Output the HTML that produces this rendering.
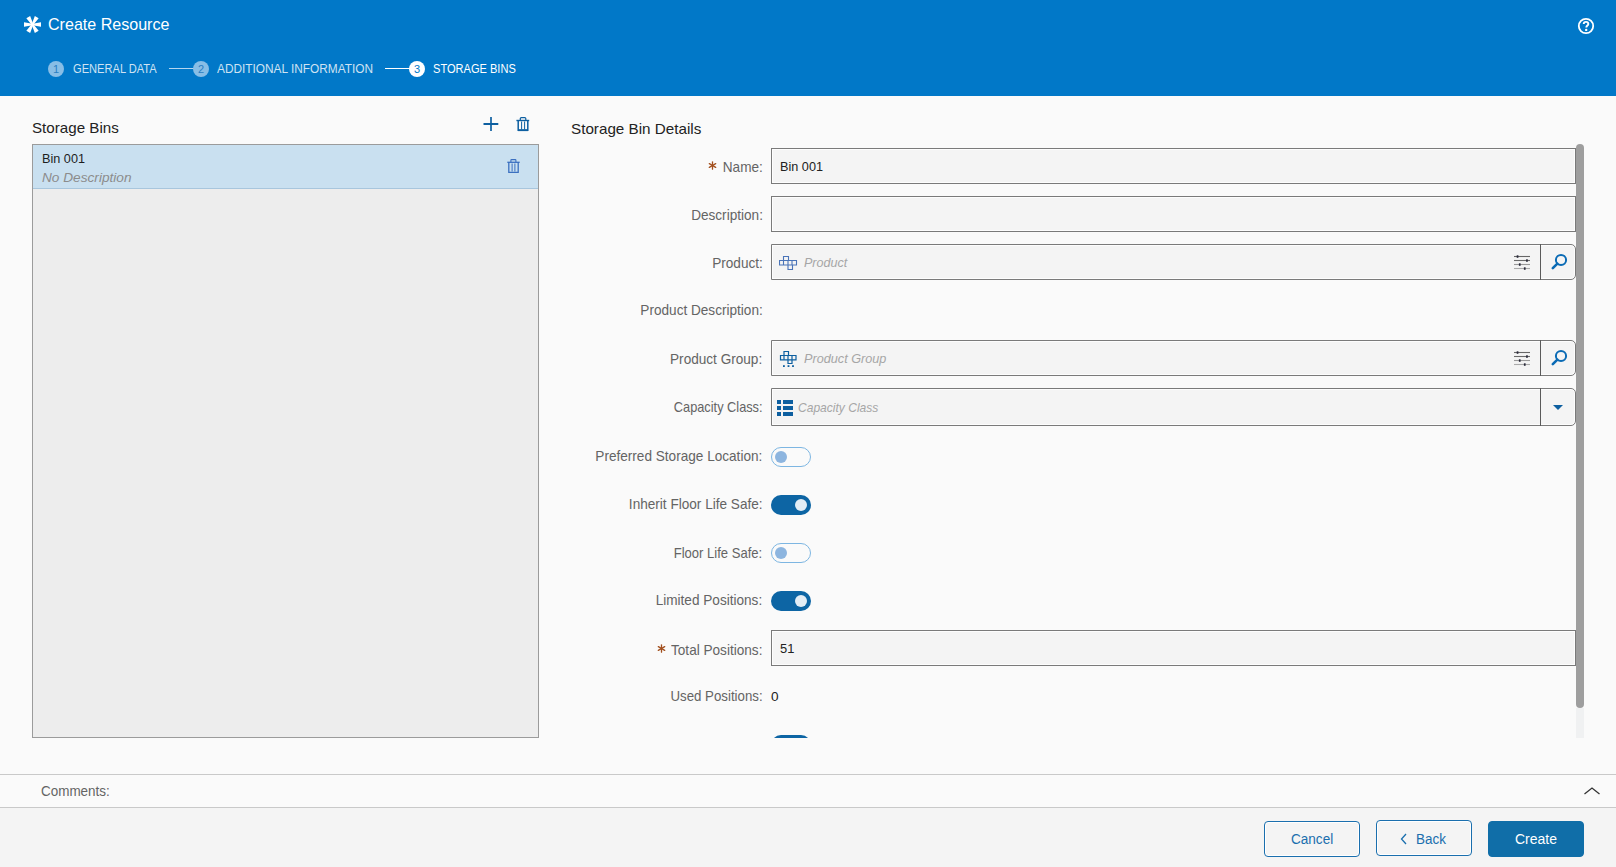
<!DOCTYPE html>
<html><head><meta charset="utf-8">
<style>
*{box-sizing:border-box;margin:0;padding:0}
html,body{width:1616px;height:867px;overflow:hidden;background:#fafafa;font-family:"Liberation Sans",sans-serif;color:#333}
.abs{position:absolute}
.t{position:absolute;white-space:nowrap;line-height:1}
#hdr{position:absolute;left:0;top:0;width:1616px;height:96px;background:#0178c8}
.step{position:absolute;top:61px;width:16px;height:16px;border-radius:50%;background:#88bee6;color:#2b7fc2;font-size:11px;line-height:16px;text-align:center}
.step.cur{background:#fff;color:#0178c8}
.stxt{position:absolute;top:63.4px;font-size:12.5px;line-height:1;color:#cfe3f3;white-space:nowrap;transform-origin:0 0}
.stxt.cur{color:#fff}
.sline{position:absolute;top:68px;height:1px;background:#b5d6ef}
.lbl{position:absolute;right:853.5px;font-size:14.2px;color:#646464;white-space:nowrap;line-height:1;text-align:right;transform-origin:100% 0}
.inp{position:absolute;left:771px;width:805px;background:#f4f4f4;border:1px solid #7a7a7a;box-shadow:inset 0 0 0 1px #fdfdfd}
.val{position:absolute;font-size:13px;color:#222;line-height:1;white-space:nowrap}
.ph{position:absolute;font-size:13px;color:#a6a6a6;font-style:italic;line-height:1;white-space:nowrap;transform-origin:0 0}
.tog{position:absolute;left:771px;width:40px;height:20px;border-radius:10px}
.tog.off{border:1px solid #7db6e2;background:#fafafa}
.tog.on{background:#0d65a4}
.knob{position:absolute;width:12px;height:12px;border-radius:50%}
.off .knob{left:3px;top:3px;background:#8db5df}
.on .knob{left:24px;top:4px;background:#e3edf5}
.btn{position:absolute;top:821px;width:96px;height:36px;border:1px solid #1a6fae;border-radius:4px;box-shadow:inset 0 0 0 1px #fff;background:#f4f4f4}
.btxt{position:absolute;top:832.1px;font-size:14px;line-height:1;color:#1a6fae;white-space:nowrap}
.sep{position:absolute;width:1px;background:#5a5a5a}
.ast{position:absolute;width:9px;height:9px}
</style></head><body>
<div id="hdr">
  <svg class="abs" style="left:22.7px;top:14.5px" width="19" height="19" viewBox="-9.5 -9.5 19 19">
    <g fill="#fff">
      <path d="M-8.5 -2.2 L0 -0.8 L8.5 -2.2 L8.5 2.2 L0 0.8 L-8.5 2.2 Z"/>
      <path d="M-8.5 -2.2 L0 -0.8 L8.5 -2.2 L8.5 2.2 L0 0.8 L-8.5 2.2 Z" transform="rotate(60)"/>
      <path d="M-8.5 -2.2 L0 -0.8 L8.5 -2.2 L8.5 2.2 L0 0.8 L-8.5 2.2 Z" transform="rotate(120)"/>
      <circle r="1.8"/>
    </g>
  </svg>
  <div class="t" style="left:48px;top:15.6px;font-size:17px;color:#fff;transform:scaleX(0.945);transform-origin:0 0">Create Resource</div>
  <div class="step" style="left:48px">1</div>
  <div class="stxt" style="left:72.5px;transform:scaleX(0.888)">GENERAL DATA</div>
  <div class="sline" style="left:169px;width:25px"></div>
  <div class="step" style="left:193px">2</div>
  <div class="stxt" style="left:217px;transform:scaleX(0.948)">ADDITIONAL INFORMATION</div>
  <div class="sline" style="left:385px;width:25px;background:#fff"></div>
  <div class="step cur" style="left:409px">3</div>
  <div class="stxt cur" style="left:433.3px;transform:scaleX(0.885)">STORAGE BINS</div>
  <svg class="abs" style="left:1577px;top:17px" width="18" height="18" viewBox="0 0 18 18">
    <circle cx="9" cy="9" r="7.2" fill="none" stroke="#fff" stroke-width="1.8"/>
    <path d="M6.7 7.1 C6.7 5.6 7.7 4.9 9 4.9 C10.4 4.9 11.3 5.8 11.3 6.9 C11.3 8.5 9.3 8.6 9.3 10.5" fill="none" stroke="#fff" stroke-width="1.9"/>
    <circle cx="9.2" cy="12.9" r="1.2" fill="#fff"/>
  </svg>
</div>

<!-- left panel -->
<div class="t" style="left:32px;top:119.9px;font-size:15px;color:#222;transform:scaleX(1.01);transform-origin:0 0">Storage Bins</div>
<svg class="abs" style="left:483px;top:117px" width="16" height="14" viewBox="0 0 16 14"><path d="M8 0V14" stroke="#0d5fa0" stroke-width="1.7"/><path d="M0.5 7H15.3" stroke="#0d5fa0" stroke-width="2"/></svg>
<svg class="abs" style="left:516px;top:116px" width="14" height="16" viewBox="0 0 14 16"><g fill="none" stroke="#0d5fa0"><path d="M0.4 4.5H13.2" stroke-width="1.4"/><path d="M4.3 4.2V2.6Q4.3 1.6 5.3 1.6H8.8Q9.8 1.6 9.8 2.6V4.2" stroke-width="1.2"/><path d="M2.2 4.8V14.3H11.8V4.8" stroke-width="1.5"/><path d="M2 14.2H12" stroke-width="1.8"/><path d="M5.6 5.5V13.5M8.6 5.5V13.5" stroke-width="1"/></g></svg>
<div class="abs" style="left:32px;top:144px;width:507px;height:594px;background:#ededed;border:1px solid #9b9b9b"></div>
<div class="abs" style="left:33px;top:145px;width:505px;height:44px;background:#c9e0f0;border-bottom:1px solid #a8c6dd"></div>
<div class="t" style="left:41.5px;top:152.3px;font-size:13.6px;color:#1e1e1e;transform:scaleX(0.932);transform-origin:0 0">Bin 001</div>
<div class="t" style="left:42px;top:170.5px;font-size:13px;color:#8c8c8c;font-style:italic;transform:scaleX(1.05);transform-origin:0 0">No Description</div>
<svg class="abs" style="left:507px;top:158px" width="13" height="16" viewBox="0 0 13 16"><g fill="none" stroke="#3b70c0"><path d="M0.3 4.3H12.7" stroke-width="1.3"/><path d="M3.9 3.9V2.2Q3.9 1.6 4.5 1.6H8.3Q8.9 1.6 8.9 2.2V3.9" stroke-width="1.1"/><path d="M1.8 4V14.3H11.2V4" stroke-width="1.3"/><path d="M5.1 5.5V13.5M7.9 5.5V13.5" stroke-width="1"/></g></svg>

<!-- right panel -->
<div class="t" style="left:571px;top:121.3px;font-size:15px;color:#222;transform:scaleX(1.015);transform-origin:0 0">Storage Bin Details</div>
<div class="abs" style="left:1576px;top:144px;width:8px;height:564px;background:#9e9e9e;border-radius:4px"></div>
<div class="abs" style="left:1576px;top:708px;width:8px;height:30px;background:#f0f1f2"></div>

<svg class="ast" style="left:708.2px;top:160.9px" viewBox="-4.5 -4.5 9 9"><g stroke="#a24f1d" stroke-width="1.3" stroke-linecap="round"><path d="M0 -3.7V3.7"/><path d="M0 -3.7V3.7" transform="rotate(60)"/><path d="M0 -3.7V3.7" transform="rotate(120)"/></g></svg>
<div class="lbl" style="top:159.7px;transform:scaleX(0.958)">Name:</div>
<div class="inp" style="top:148px;height:36px"></div>
<div class="val" style="left:780.3px;top:159.6px;font-size:13.6px;transform:scaleX(0.932);transform-origin:0 0">Bin 001</div>

<div class="lbl" style="top:207.7px;transform:scaleX(0.958)">Description:</div>
<div class="inp" style="top:196px;height:36px"></div>

<div class="lbl" style="top:255.7px;transform:scaleX(0.958)">Product:</div>
<div class="inp" style="top:244px;height:36px;border-radius:0 5px 5px 0"></div>
<svg class="abs" style="left:779px;top:255px" width="19" height="16" viewBox="0 0 19 16"><g fill="none" stroke="#4a74b8" stroke-width="1.1"><path d="M4.5 5.5V1.5H9.5V5.5"/><path d="M0.5 5.5H17.5V10H0.5Z"/><path d="M4.5 5.5V10M9 5.5V10M13 5.5V10"/><path d="M9 10V14.5H13.5V10"/></g></svg>
<div class="ph" style="left:803.5px;top:255.7px;font-size:13.6px;transform:scaleX(0.9234)">Product</div>
<svg class="abs" style="left:1513px;top:254px" width="18" height="17" viewBox="0 0 18 17"><g stroke-width="1.1"><path d="M1 2.5H17" stroke="#666"/><path d="M1 6.5H17" stroke="#6a6a6a"/><path d="M1 10.5H17" stroke="#999"/><path d="M1 14.5H17" stroke="#aaa"/></g><g fill="#2a2a3a"><rect x="3.7" y="1.3" width="1.7" height="2.5"/><rect x="13.1" y="5.3" width="1.7" height="2.5"/><rect x="5.9" y="9.3" width="1.7" height="2.5"/><rect x="10.9" y="13.3" width="1.7" height="2.5"/></g></svg>
<div class="sep" style="left:1540px;top:244px;height:36px"></div>
<svg class="abs" style="left:1549px;top:251px" width="20" height="20" viewBox="0 0 20 20"><circle cx="12" cy="9" r="5.1" fill="none" stroke="#0b6bb5" stroke-width="2"/><path d="M8.4 12.6L3.8 17.2" stroke="#0b6bb5" stroke-width="2.6" stroke-linecap="round"/></svg>

<div class="lbl" style="top:303.2px;transform:scaleX(0.958)">Product Description:</div>

<div class="lbl" style="top:351.5px;transform:scaleX(0.958)">Product Group:</div>
<div class="inp" style="top:340px;height:36px;border-radius:0 5px 5px 0"></div>
<svg class="abs" style="left:779px;top:350px" width="19" height="19" viewBox="0 0 19 19"><g fill="none" stroke="#0d5fa0" stroke-width="1.2"><path d="M5 5.5V1.5H9.5V5.5"/><path d="M1.5 5.5H17V9.8H1.5Z"/><path d="M5 5.5V9.8M9 5.5V9.8M13 5.5V9.8"/><path d="M9 9.8V13.5H13V9.8"/></g><g fill="#0d5fa0"><rect x="4" y="15.2" width="1.8" height="1.8"/><rect x="8.6" y="15.2" width="1.8" height="1.8"/><rect x="13.1" y="15.2" width="1.8" height="1.8"/></g></svg>
<div class="ph" style="left:803.5px;top:352.3px;font-size:13.6px;transform:scaleX(0.9320)">Product Group</div>
<svg class="abs" style="left:1513px;top:350px" width="18" height="17" viewBox="0 0 18 17"><g stroke-width="1.1"><path d="M1 2.5H17" stroke="#666"/><path d="M1 6.5H17" stroke="#6a6a6a"/><path d="M1 10.5H17" stroke="#999"/><path d="M1 14.5H17" stroke="#aaa"/></g><g fill="#2a2a3a"><rect x="3.7" y="1.3" width="1.7" height="2.5"/><rect x="13.1" y="5.3" width="1.7" height="2.5"/><rect x="5.9" y="9.3" width="1.7" height="2.5"/><rect x="10.9" y="13.3" width="1.7" height="2.5"/></g></svg>
<div class="sep" style="left:1540px;top:340px;height:36px"></div>
<svg class="abs" style="left:1549px;top:347px" width="20" height="20" viewBox="0 0 20 20"><circle cx="12" cy="9" r="5.1" fill="none" stroke="#0b6bb5" stroke-width="2"/><path d="M8.4 12.6L3.8 17.2" stroke="#0b6bb5" stroke-width="2.6" stroke-linecap="round"/></svg>

<div class="lbl" style="top:399.8px;transform:scaleX(0.9005)">Capacity Class:</div>
<div class="inp" style="top:388px;height:38px;border-radius:0 5px 5px 0"></div>
<svg class="abs" style="left:777px;top:400px" width="16" height="16" viewBox="0 0 16 16"><g fill="#0d5fa0"><rect x="0" y="0" width="4" height="4"/><rect x="6" y="0" width="10" height="4"/><rect x="0" y="6" width="4" height="4"/><rect x="6" y="6" width="10" height="4"/><rect x="0" y="12" width="4" height="4"/><rect x="6" y="12" width="10" height="4"/></g></svg>
<div class="ph" style="left:797.5px;top:401.0px;font-size:13.6px;transform:scaleX(0.8861)">Capacity Class</div>
<div class="sep" style="left:1540px;top:388px;height:38px"></div>
<svg class="abs" style="left:1553px;top:405px" width="10" height="5" viewBox="0 0 10 5"><path d="M0 0H10L5 5Z" fill="#0d5fa0"/></svg>

<div class="lbl" style="top:449.3px;transform:scaleX(0.958)">Preferred Storage Location:</div>
<div class="tog off" style="top:447px"><div class="knob"></div></div>

<div class="lbl" style="top:497.0px;transform:scaleX(0.958)">Inherit Floor Life Safe:</div>
<div class="tog on" style="top:495px"><div class="knob"></div></div>

<div class="lbl" style="top:545.5px;transform:scaleX(0.9197)">Floor Life Safe:</div>
<div class="tog off" style="top:543px"><div class="knob"></div></div>

<div class="lbl" style="top:593.3px;transform:scaleX(0.958)">Limited Positions:</div>
<div class="tog on" style="top:591px"><div class="knob"></div></div>

<svg class="ast" style="left:656.8px;top:643.6px" viewBox="-4.5 -4.5 9 9"><g stroke="#a24f1d" stroke-width="1.3" stroke-linecap="round"><path d="M0 -3.7V3.7"/><path d="M0 -3.7V3.7" transform="rotate(60)"/><path d="M0 -3.7V3.7" transform="rotate(120)"/></g></svg>
<div class="lbl" style="top:642.7px;transform:scaleX(0.958)">Total Positions:</div>
<div class="inp" style="top:630px;height:36px"></div>
<div class="val" style="left:780px;top:641.5px;font-size:13.6px;transform:scaleX(0.95);transform-origin:0 0">51</div>

<div class="lbl" style="top:689.1px;transform:scaleX(0.934)">Used Positions:</div>
<div class="val" style="left:771px;top:689.5px;font-size:13.6px">0</div>

<div class="abs" style="left:771px;top:735px;width:40px;height:3px;overflow:hidden"><div style="width:40px;height:20px;border-radius:10px;background:#0d65a4"></div></div>

<!-- footer -->
<div class="abs" style="left:0;top:774px;width:1616px;height:1px;background:#c9c9c9"></div>
<div class="t" style="left:40.5px;top:784.1px;font-size:14.2px;color:#646464;transform:scaleX(0.948);transform-origin:0 0">Comments:</div>
<svg class="abs" style="left:1583px;top:786px" width="18" height="10" viewBox="0 0 18 10"><path d="M1.5 8L9 2L16.5 8" fill="none" stroke="#333" stroke-width="1.3"/></svg>
<div class="abs" style="left:0;top:807px;width:1616px;height:60px;background:#f4f4f4;border-top:1px solid #c9c9c9"></div>
<div class="btn" style="left:1264px"></div>
<div class="btxt" style="left:1290.5px;transform:scaleX(0.968);transform-origin:0 0">Cancel</div>
<div class="btn" style="left:1376px;top:820px"></div>
<svg class="abs" style="left:1400px;top:833px" width="8" height="12" viewBox="0 0 8 12"><path d="M6 1L1.5 6L6 11" fill="none" stroke="#1a6fae" stroke-width="1.3"/></svg>
<div class="btxt" style="left:1415.5px;transform:scaleX(0.961);transform-origin:0 0">Back</div>
<div class="btn" style="left:1488px;background:#106ea8;border-color:#106ea8;box-shadow:none"></div>
<div class="btxt" style="left:1515px;color:#fff">Create</div>
</body></html>
